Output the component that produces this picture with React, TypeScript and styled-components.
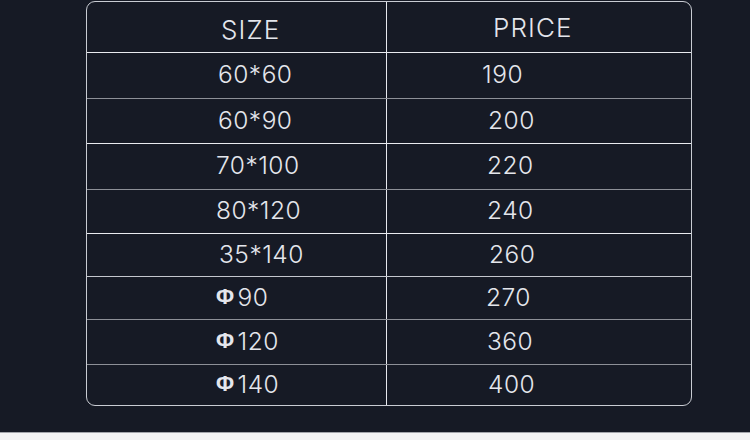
import React from 'react';

import styled, { createGlobalStyle } from 'styled-components';

const GlobalStyle = createGlobalStyle`
	html, body {
		margin: 0;
		padding: 0;
		background: #161a25;
	}
`;

// Page
const Page = styled.div`
	display: flex;
	flex-direction: column;
	width: 750px;
	height: 440px;
	background: #161a25;
	font-family: Inter, 'Liberation Sans', sans-serif;
	font-weight: 300;
	color: #e4e6ec;
	overflow: hidden;
`;

const Stage = styled.div`
	flex-grow: 1;
	padding: 1px 0 0 86px;
`;

const Strip = styled.div`
	height: 7px;
	background: #f3f3f4;
	border-top: 1px solid #a3a5ab;
`;

// Table
const Table = styled.div`
	width: 604px;
	border: 1px solid #c9ccd3;
	border-radius: 9px;
`;

const Row = styled.div<{ $height: number; $line?: string }>`
	display: grid;
	grid-template-columns: 300px 1fr;
	height: ${(p) => p.$height}px;
	border-bottom: ${(p) => (p.$line ? `1px solid ${p.$line}` : 'none')};
	box-sizing: border-box;
`;

// $dy > 0 pushes the text down, < 0 lifts it
const Cell = styled.div<{ $indent: number; $divider?: boolean; $dy?: number }>`
	display: flex;
	align-items: center;
	padding-left: ${(p) => p.$indent}px;
	padding-top: ${(p) => Math.max(p.$dy ?? 0, 0)}px;
	padding-bottom: ${(p) => Math.max(-(p.$dy ?? 0), 0)}px;
	border-right: ${(p) => (p.$divider ? '1px solid #e6e8ee' : 'none')};
	font-size: 24.5px;
	letter-spacing: 0.5px;
	white-space: nowrap;
`;

const HeadCell = styled(Cell)`
	font-size: 26px;
	letter-spacing: 1.1px;
`;

const Phi = styled.span`
	font-family: 'Liberation Sans', sans-serif;
	font-weight: 700;
	font-size: 22px;
	margin-right: 3px;
`;

type Item = {
	size: string;
	price: string;
	phi?: boolean;
	sx: number;
	px: number;
	h: number;
	line?: string;
};

const WHITE = '#e9ebf0';
const GREY = '#8d9097';

const rows: Item[] = [
	{ size: '60*60', price: '190', sx: 131, px: 95, h: 46, line: GREY },
	{ size: '60*90', price: '200', sx: 131, px: 101, h: 45, line: WHITE },
	{ size: '70*100', price: '220', sx: 129, px: 100, h: 46, line: GREY },
	{ size: '80*120', price: '240', sx: 129, px: 100, h: 44, line: WHITE },
	{ size: '35*140', price: '260', sx: 132, px: 102, h: 43, line: '#c4c7ce' },
	{ size: '90', price: '270', phi: true, sx: 129, px: 99, h: 43, line: GREY },
	{ size: '120', price: '360', phi: true, sx: 129, px: 100, h: 45, line: GREY },
	{ size: '140', price: '400', phi: true, sx: 129, px: 101, h: 40 },
];

export default function App() {
	return (
		<Page>
			<GlobalStyle />
			<Stage>
				<Table>
					<Row $height={51} $line={WHITE}>
						<HeadCell $indent={134} $divider $dy={4}>
							SIZE
						</HeadCell>
						<HeadCell $indent={106} $dy={0}>
							PRICE
						</HeadCell>
					</Row>
					{rows.map((r) => (
						<Row key={r.size} $height={r.h} $line={r.line}>
							<Cell $indent={r.sx} $divider $dy={-3}>
								{r.phi && <Phi>Φ</Phi>}
								{r.size}
							</Cell>
							<Cell $indent={r.px} $dy={-3}>
								{r.price}
							</Cell>
						</Row>
					))}
				</Table>
			</Stage>
			<Strip />
		</Page>
	);
}
